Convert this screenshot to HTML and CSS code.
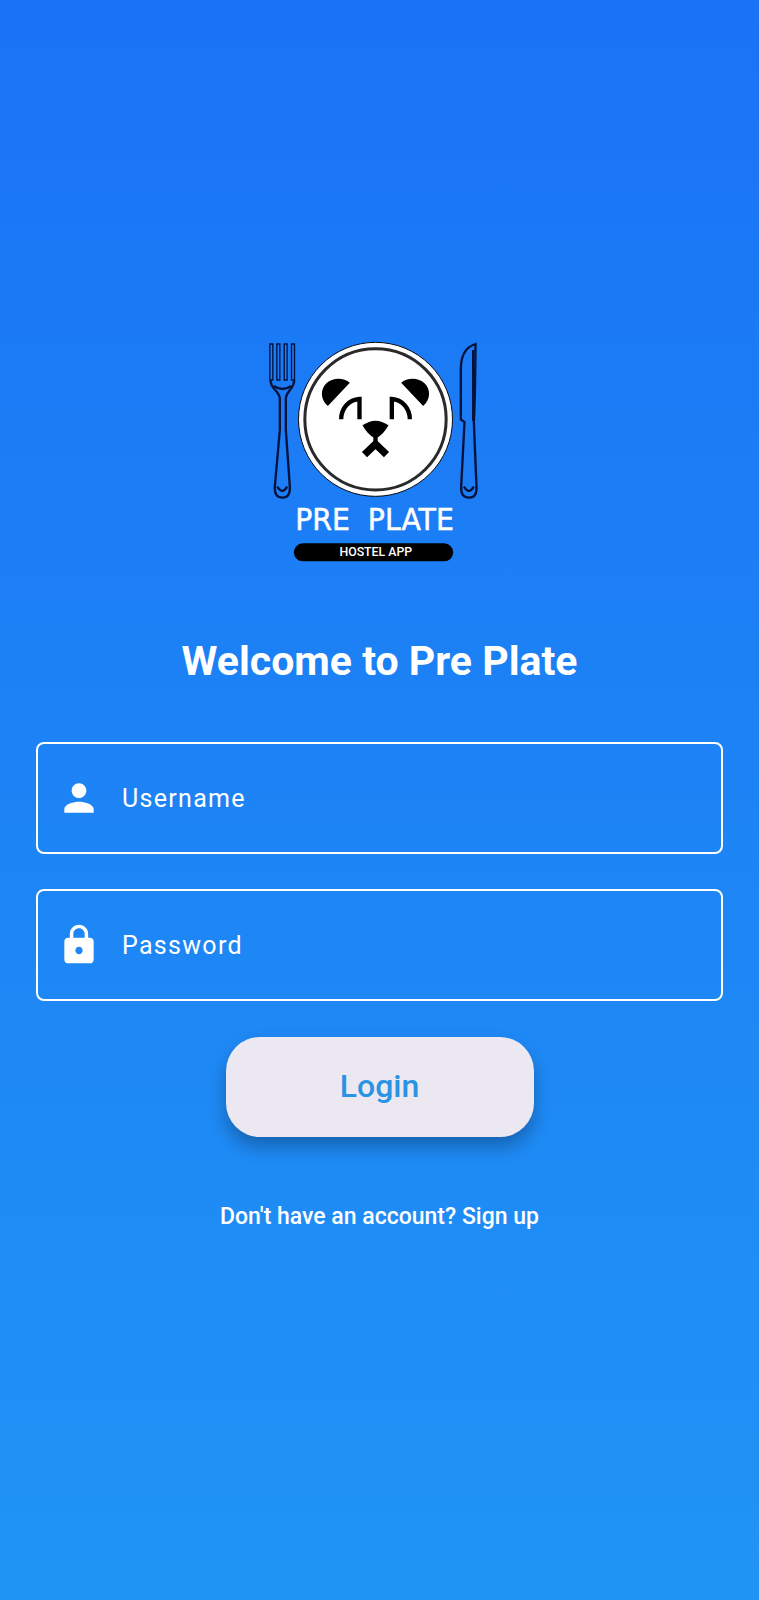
FILE: index.html
```html
<!DOCTYPE html>
<html lang="en">
<head>
    <meta charset="UTF-8">
    <meta name="viewport" content="width=device-width, initial-scale=1.0">
    <title>Pre Plate</title>
    <link rel="stylesheet" href="styles.css">
</head>
<body>
    <div class="container">
        <svg class="logo" viewBox="28.5 0 720 720" xmlns="http://www.w3.org/2000/svg">
            <!-- fork -->
            <g class="cutlery">
                <path class="tines" d="M58 42H67V150H58ZM79 42H88V150H79ZM101 42H110V150H101ZM123 42H132V150H123Z"/>
                <path d="M60 150C60 178 86 182 88 205V300L73 470Q71 503 96 503Q120 503 118 470L106 300V205C108 182 131 178 131 150"/>
                <path d="M70 168Q96 186 122 168M80 470Q96 495 110 470"/>
            </g>
            <!-- knife -->
            <g class="cutlery">
                <path d="M675 42Q632 55 631 115V268L642 276L632 470Q630 503 656 503Q680 503 678 470L670 276Q674 200 675 42Z"/>
                <path d="M668 60V272M640 470Q656 495 670 470"/>
            </g>
            <!-- plate -->
            <circle class="plate" cx="375" cy="268" r="231"/>
            <circle class="plate-ring" cx="375" cy="268" r="212"/>
            <!-- panda -->
            <path d="M298 158C280 142 245 142 228 160C210 177 208 207 232 228Z"/>
            <path d="M452 158C470 142 505 142 522 160C540 177 542 207 518 228Z"/>
            <path class="eye" d="M272 268C272 235 295 209 327 207V268"/>
            <path class="eye" d="M424 268V207C455 209 478 235 478 268"/>
            <path d="M336 286Q375 258 414 286Q400 313 375 327Q350 313 336 286Z"/>
            <path class="mouth" d="M342 374L375 342L408 374"/>
            <path class="eye" d="M375 322V342"/>
            <text class="logo-title" x="372" y="601" textLength="476" lengthAdjust="spacingAndGlyphs">PRE  PLATE</text>
            <rect x="130" y="640" width="478" height="54" rx="27"/>
            <text class="logo-sub" x="376" y="679">HOSTEL APP</text>
        </svg>

        <h1>Welcome to Pre Plate</h1>

        <form class="login-form">
            <label class="field">
                <svg class="field-icon" viewBox="0 0 24 24" xmlns="http://www.w3.org/2000/svg">
                    <path d="M12 12c2.21 0 4-1.79 4-4s-1.79-4-4-4-4 1.79-4 4 1.79 4 4 4zm0 2c-2.67 0-8 1.34-8 4v2h16v-2c0-2.66-5.33-4-8-4z"/>
                </svg>
                <span>Username</span>
            </label>
            <label class="field">
                <svg class="field-icon" viewBox="0 0 24 24" xmlns="http://www.w3.org/2000/svg">
                    <path d="M18 8h-1V6c0-2.76-2.24-5-5-5S7 3.24 7 6v2H6c-1.1 0-2 .9-2 2v10c0 1.1.9 2 2 2h12c1.1 0 2-.9 2-2V10c0-1.1-.9-2-2-2zm-6 9c-1.1 0-2-.9-2-2s.9-2 2-2 2 .9 2 2-.9 2-2 2zm3.1-9H8.9V6c0-1.71 1.39-3.1 3.1-3.1 1.71 0 3.1 1.39 3.1 3.1v2z"/>
                </svg>
                <span>Password</span>
            </label>
            <button class="login-button" type="button">Login</button>
        </form>

        <p class="signup">Don't have an account? Sign up</p>
    </div>
</body>
</html>
```

FILE: styles.css
```css
html, body {
    margin: 0;
    padding: 0;
    height: 1600px;
    overflow: hidden;
    background: linear-gradient(to bottom, #1a73f6, #2094f5);
    font-family: Roboto, "Liberation Sans", sans-serif;
    color: white;
}

.container {
    display: flex;
    flex-direction: column;
    align-items: center;
    padding: 330px 36px 0;
}

.logo {
    width: 240px;
    height: 240px;
    flex: none;
}

.cutlery path {
    fill: none;
    stroke: #04123c;
    stroke-width: 7;
}

.cutlery .tines {
    stroke-width: 4;
}

.plate {
    fill: white;
    stroke: #0a0a0a;
    stroke-width: 3;
}

.plate-ring {
    fill: white;
    stroke: #2a2a2a;
    stroke-width: 9;
}

.eye {
    fill: none;
    stroke: black;
    stroke-width: 13;
}

.mouth {
    fill: none;
    stroke: black;
    stroke-width: 22;
}

.logo-title {
    fill: white;
    stroke: white;
    stroke-width: 1.5;
    font-family: "DejaVu Sans", sans-serif;
    font-size: 88px;
    text-anchor: middle;
    white-space: pre;
}

.logo-sub {
    fill: white;
    font-family: Roboto, sans-serif;
    font-size: 37px;
    font-weight: 500;
    text-anchor: middle;
}

h1 {
    margin: 67px 0 0;
    font-size: 41px;
    line-height: 48px;
    font-weight: 700;
}

.login-form {
    display: flex;
    flex-direction: column;
    align-items: center;
    gap: 35px;
    width: 100%;
    margin-top: 57px;
}

.field {
    display: flex;
    align-items: center;
    gap: 21px;
    width: 100%;
    height: 112px;
    box-sizing: border-box;
    padding: 0 0 0 19px;
    border: 2px solid white;
    border-radius: 8px;
    font-size: 25px;
    letter-spacing: 1.3px;
}

.field-icon {
    width: 44px;
    height: 44px;
    fill: white;
}

.login-button {
    width: 308px;
    height: 100px;
    margin-top: 1px;
    padding: 0 0 3px;
    border: none;
    border-radius: 34px;
    background-color: #ece8f1;
    color: #2a93e4;
    font-family: inherit;
    font-size: 32px;
    font-weight: 500;
    box-shadow: 0 10px 18px rgba(0, 0, 0, 0.28);
}

.signup {
    margin: 65px 0 0;
    font-size: 23px;
    font-weight: 500;
    line-height: 30px;
}
```
